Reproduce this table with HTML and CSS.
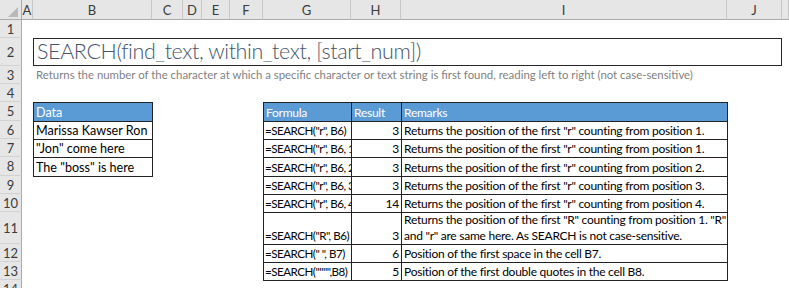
FILE: index.html
```html
<!DOCTYPE html>
<html lang="en">
<head>
    <meta charset="UTF-8">
    <meta name="viewport" content="width=device-width, initial-scale=1.0">
    <title>SEARCH function</title>
    <link rel="stylesheet" href="styles.css">
</head>
<body>
    <div class="sheet">
        <div class="corner">
            <svg width="22" height="20" viewBox="0 0 22 20"><polygon points="18,7 18,17 8,17" fill="#b9b9b9"/></svg>
        </div>
        <div class="col-head">A</div>
        <div class="col-head">B</div>
        <div class="col-head">C</div>
        <div class="col-head">D</div>
        <div class="col-head">E</div>
        <div class="col-head">F</div>
        <div class="col-head">G</div>
        <div class="col-head">H</div>
        <div class="col-head">I</div>
        <div class="col-head">J</div>
        <div class="col-head"></div>

        <div class="row-head r1">1</div>
        <div class="row-head r2">2</div>
        <div class="row-head r3">3</div>
        <div class="row-head r4">4</div>
        <div class="row-head r5">5</div>
        <div class="row-head r6">6</div>
        <div class="row-head r7">7</div>
        <div class="row-head r8">8</div>
        <div class="row-head r9">9</div>
        <div class="row-head r10">10</div>
        <div class="row-head r11">11</div>
        <div class="row-head r12">12</div>
        <div class="row-head r13">13</div>
        <div class="row-head r14">14</div>

        <div class="title-cell">SEARCH(find_text, within_text, [start_num])</div>
        <div class="note">Returns the number of the character at which a specific character or text string is first found, reading left to right (not case-sensitive)</div>

        <div class="data-table">
            <div class="cell head">Data</div>
            <div class="cell">Marissa Kawser Ron</div>
            <div class="cell">"Jon" come here</div>
            <div class="cell">The "boss" is here</div>
        </div>

        <div class="remarks-table">
            <div class="cell head">Formula</div>
            <div class="cell head">Result</div>
            <div class="cell head">Remarks</div>

            <div class="cell formula">=SEARCH("r", B6)</div>
            <div class="cell num">3</div>
            <div class="cell">Returns the position of the first "r" counting from position 1.</div>

            <div class="cell formula">=SEARCH("r", B6, 1)</div>
            <div class="cell num">3</div>
            <div class="cell">Returns the position of the first "r" counting from position 1.</div>

            <div class="cell formula">=SEARCH("r", B6, 2)</div>
            <div class="cell num">3</div>
            <div class="cell">Returns the position of the first "r" counting from position 2.</div>

            <div class="cell formula">=SEARCH("r", B6, 3)</div>
            <div class="cell num">3</div>
            <div class="cell">Returns the position of the first "r" counting from position 3.</div>

            <div class="cell formula">=SEARCH("r", B6, 4)</div>
            <div class="cell num">14</div>
            <div class="cell">Returns the position of the first "r" counting from position 4.</div>

            <div class="cell formula">=SEARCH("R", B6)</div>
            <div class="cell num">3</div>
            <div class="cell"><span>Returns the position of the first "R" counting from position 1. "R"<br>and "r" are same here. As SEARCH is not case-sensitive.</span></div>

            <div class="cell formula">=SEARCH(" ", B7)</div>
            <div class="cell num">6</div>
            <div class="cell">Position of the first space in the cell B7.</div>

            <div class="cell formula">=SEARCH("""",B8)</div>
            <div class="cell num">5</div>
            <div class="cell">Position of the first double quotes in the cell B8.</div>
        </div>
    </div>
</body>
</html>
```

FILE: styles.css
```css
body {
    margin: 0;
    background: #fff;
}
.sheet {
    display: grid;
    grid-template-columns: 22px 11px 119px 31px 19px 28px 33px 88px 50px 326px 55px 7px;
    grid-template-rows: 20px 18px 28px 18px 18px 19px 18px 18px 19px 18px 18px 32px 18px 18px 18px;
    width: 789px;
    height: 288px;
    overflow: hidden;
    font-family: Lato, "Liberation Sans", sans-serif;
}
.corner {
    grid-column: 1;
    grid-row: 1;
    background: #e6e6e6;
    border-right: 1px solid #ababab;
    border-bottom: 1px solid #ababab;
    box-sizing: border-box;
}
.corner svg {
    display: block;
}
.col-head {
    grid-row: 1;
    background: #e6e6e6;
    border-right: 1px solid #c6c6c6;
    border-bottom: 1px solid #ababab;
    box-sizing: border-box;
    display: flex;
    align-items: center;
    justify-content: center;
    font-size: 13px;
    color: #3b3b3b;
}
.row-head {
    grid-column: 1;
    background: #e6e6e6;
    border-right: 1px solid #ababab;
    border-bottom: 1px solid #d2d2d2;
    box-sizing: border-box;
    display: flex;
    align-items: center;
    justify-content: center;
    font-size: 13px;
    color: #3b3b3b;
}
.r1 { grid-row: 2; }
.r2 { grid-row: 3; }
.r3 { grid-row: 4; }
.r4 { grid-row: 5; }
.r5 { grid-row: 6; }
.r6 { grid-row: 7; }
.r7 { grid-row: 8; }
.r8 { grid-row: 9; }
.r9 { grid-row: 10; }
.r10 { grid-row: 11; }
.r11 { grid-row: 12; }
.r12 { grid-row: 13; }
.r13 { grid-row: 14; }
.r14 { grid-row: 15; }

.title-cell {
    grid-column: 3 / 12;
    grid-row: 3;
    border: 1px solid #262626;
    box-sizing: border-box;
    display: flex;
    align-items: flex-end;
    padding-left: 3px;
    font-size: 21.5px;
    font-weight: 300;
    letter-spacing: -0.4px;
    line-height: 1.2;
    color: #44546a;
    white-space: nowrap;
}
.note {
    grid-column: 3 / 12;
    grid-row: 4;
    align-self: end;
    padding: 0 0 2px 3px;
    font-size: 11.4px;
    line-height: 1.2;
    color: #7f7f7f;
    white-space: nowrap;
}
.data-table,
.remarks-table {
    align-self: start;
    justify-self: start;
    display: grid;
    gap: 1px;
    padding: 1px;
    background: #222;
}
.data-table {
    grid-column: 3;
    grid-row: 6 / 10;
    grid-template-columns: 118px;
    grid-template-rows: 18px 17px 17px 18px;
}
.remarks-table {
    grid-column: 8 / 11;
    grid-row: 6 / 15;
    grid-template-columns: 87px 49px 325px;
    grid-template-rows: 18px 17px 17px 18px 17px 17px 31px 17px 17px;
}
.cell {
    background: #fff;
    display: flex;
    align-items: flex-end;
    padding: 0 2px;
    overflow: hidden;
    white-space: nowrap;
    font-size: 12px;
    letter-spacing: -0.25px;
    line-height: 16px;
    color: #000;
}
.data-table .cell {
    font-size: 12.6px;
    letter-spacing: 0;
}
.cell.head {
    background: #5b9bd5;
    color: #fff;
}
.cell.formula {
    padding-left: 1px;
    font-size: 11.6px;
    letter-spacing: -0.5px;
}
.cell.num {
    justify-content: flex-end;
}
```
